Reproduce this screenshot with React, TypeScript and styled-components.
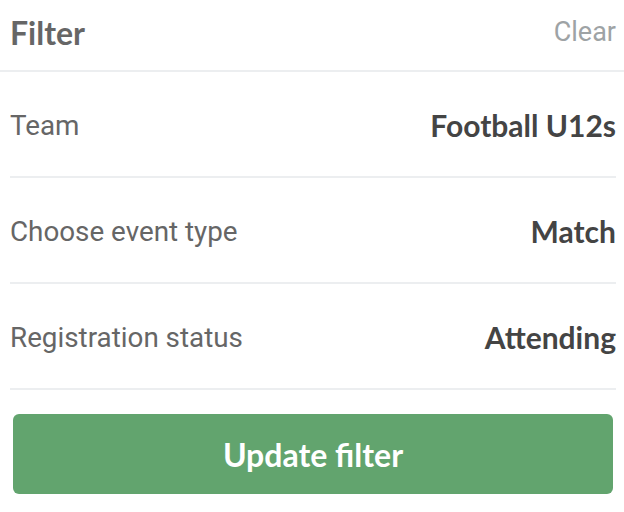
import React from "react";
import styled, { createGlobalStyle } from "styled-components";

const GlobalStyle = createGlobalStyle`
    html, body {
        margin: 0;
        padding: 0;
        background: #ffffff;
    }
    body {
        width: 624px;
        height: 512px;
        overflow: hidden;
        font-family: "Roboto", "Liberation Sans", sans-serif;
    }
`;

const Panel = styled.div`
    display: flex;
    flex-direction: column;
    width: 624px;
`;

const Header = styled.div`
    display: flex;
    justify-content: space-between;
    align-items: center;
    height: 72px;
    padding: 0 8px 6px 10px;
    box-sizing: border-box;
    border-bottom: 2px solid #eceef0;
`;

const Title = styled.div`
    font-family: "Lato", "Liberation Sans", sans-serif;
    font-weight: 700;
    font-size: 32px;
    color: #666666;
`;

const ClearButton = styled.button`
    border: none;
    background: none;
    padding: 0;
    font-family: "Roboto", "Liberation Sans", sans-serif;
    font-size: 27px;
    color: #9ea3a5;
    cursor: pointer;
`;

const List = styled.div`
    display: flex;
    flex-direction: column;
    padding: 0 8px 0 10px;
`;

const Row = styled.div`
    display: flex;
    justify-content: space-between;
    align-items: center;
    height: 106px;
    padding-top: 2px;
    box-sizing: border-box;
    border-bottom: 2px solid #eceef0;
`;

const Label = styled.div`
    font-family: "Roboto", "Liberation Sans", sans-serif;
    font-size: 27.8px;
    color: #666666;
`;

const Value = styled.div`
    font-family: "Lato", "Liberation Sans", sans-serif;
    font-weight: 700;
    font-size: 30px;
    color: #444444;
`;

const Footer = styled.div`
    padding: 24px 11px 0 13px;
`;

const UpdateButton = styled.button`
    display: flex;
    align-items: center;
    justify-content: center;
    width: 100%;
    height: 80px;
    border: none;
    border-radius: 6px;
    background: #62a46e;
    color: #ffffff;
    font-family: "Lato", "Liberation Sans", sans-serif;
    font-weight: 700;
    font-size: 32px;
    cursor: pointer;
`;

const filters = [
    { label: "Team", value: "Football U12s" },
    { label: "Choose event type", value: "Match" },
    { label: "Registration status", value: "Attending" },
];

const App = () => {
    return (
        <>
            <GlobalStyle />
            <Panel>
                <Header>
                    <Title>Filter</Title>
                    <ClearButton>Clear</ClearButton>
                </Header>
                <List>
                    {filters.map((f) => (
                        <Row key={f.label}>
                            <Label>{f.label}</Label>
                            <Value>{f.value}</Value>
                        </Row>
                    ))}
                </List>
                <Footer>
                    <UpdateButton>Update filter</UpdateButton>
                </Footer>
            </Panel>
        </>
    );
};

export default App;
